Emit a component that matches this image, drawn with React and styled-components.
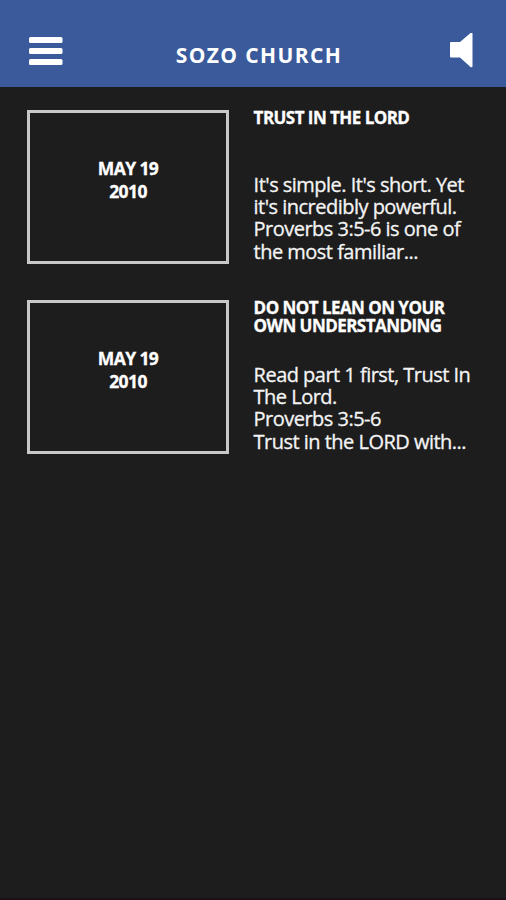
import React from 'react';
import styled, { createGlobalStyle } from 'styled-components';

const GlobalStyle = createGlobalStyle`
    * {
        box-sizing: border-box;
        margin: 0;
        padding: 0;
    }

    body {
        background-color: #1d1d1d;
        color: #fff;
        font-family: 'Open Sans', 'Noto Sans', sans-serif;
    }
`;

const Screen = styled.div`
    display: flex;
    flex-direction: column;
    width: 506px;
    height: 900px;
    background-color: #1d1d1d;
    border-bottom: 2px solid #1b1116;
    overflow: hidden;
`;

const TopBar = styled.header`
    display: grid;
    grid-template-columns: 34px 1fr 26px;
    align-items: center;
    height: 87px;
    padding: 22px 32px 8px 29px;
    background-color: #3a5a9b;
    flex-shrink: 0;
`;

const IconButton = styled.button`
    display: flex;
    align-items: center;
    justify-content: center;
    border: none;
    background: none;
    color: #fff;
    cursor: pointer;
`;

const PageTitle = styled.h1`
    padding: 9px 0 0 7px;
    font-size: 21px;
    font-weight: 700;
    letter-spacing: 1.4px;
    text-align: center;
`;

const PostList = styled.main`
    display: flex;
    flex-direction: column;
    gap: 36px;
    padding: 23px 27px;
`;

const Post = styled.article`
    display: grid;
    grid-template-columns: 202px 1fr;
    column-gap: 24.6px;
    height: 154px;
`;

const DateBox = styled.div`
    padding-top: 44px;
    border: 3px solid #c8c8c8;
    font-size: 17.5px;
    font-weight: 700;
    letter-spacing: -0.6px;
    line-height: 23px;
    text-align: center;
    white-space: pre-line;
    -webkit-text-stroke: 0.3px #fff;
`;

const PostBody = styled.div`
    display: flex;
    flex-direction: column;
    justify-content: space-between;
    padding-bottom: 1px;
    white-space: pre;
`;

const PostTitle = styled.h2`
    margin-top: -1px;
    font-size: 17px;
    font-weight: 700;
    letter-spacing: -0.55px;
    line-height: 18.3px;
    -webkit-text-stroke: 0.3px #fff;
`;

const Excerpt = styled.p`
    color: #f4f4f4;
    font-size: 20px;
    letter-spacing: -0.52px;
    line-height: 22.3px;
    -webkit-text-stroke: 0.3px #f4f4f4;
`;

const posts = [
    {
        id: 1,
        date: 'MAY 19\n2010',
        title: 'TRUST IN THE LORD',
        text: "It's simple. It's short. Yet\nit's incredibly powerful.\nProverbs 3:5-6 is one of\nthe most familiar...",
    },
    {
        id: 2,
        date: 'MAY 19\n2010',
        title: 'DO NOT LEAN ON YOUR\nOWN UNDERSTANDING',
        text: 'Read part 1 first, Trust In\nThe Lord.\nProverbs 3:5-6\nTrust in the LORD with...',
    },
];

const App = () => {
    return (
        <Screen>
            <GlobalStyle />
            <TopBar>
                <IconButton aria-label="Menu">
                    <svg width="34" height="30" viewBox="0 0 34 30" fill="currentColor">
                        <rect x="0" y="1" width="33.5" height="6" rx="1.5" />
                        <rect x="0" y="12" width="33.5" height="6" rx="1.5" />
                        <rect x="0" y="23" width="33.5" height="6" rx="1.5" />
                    </svg>
                </IconButton>
                <PageTitle>SOZO CHURCH</PageTitle>
                <IconButton aria-label="Sound">
                    <svg width="26" height="36" viewBox="0 0 26 36" fill="currentColor">
                        <path d="M3 9h9L22.500 0q2-1 2 1v32q0 2-2 1L12 24.500H3q-1 0-1-1V10q0-1 1-1z" />
                    </svg>
                </IconButton>
            </TopBar>
            <PostList>
                {posts.map((post) => (
                    <Post key={post.id}>
                        <DateBox>{post.date}</DateBox>
                        <PostBody>
                            <PostTitle>{post.title}</PostTitle>
                            <Excerpt>{post.text}</Excerpt>
                        </PostBody>
                    </Post>
                ))}
            </PostList>
        </Screen>
    );
};

export default App;
